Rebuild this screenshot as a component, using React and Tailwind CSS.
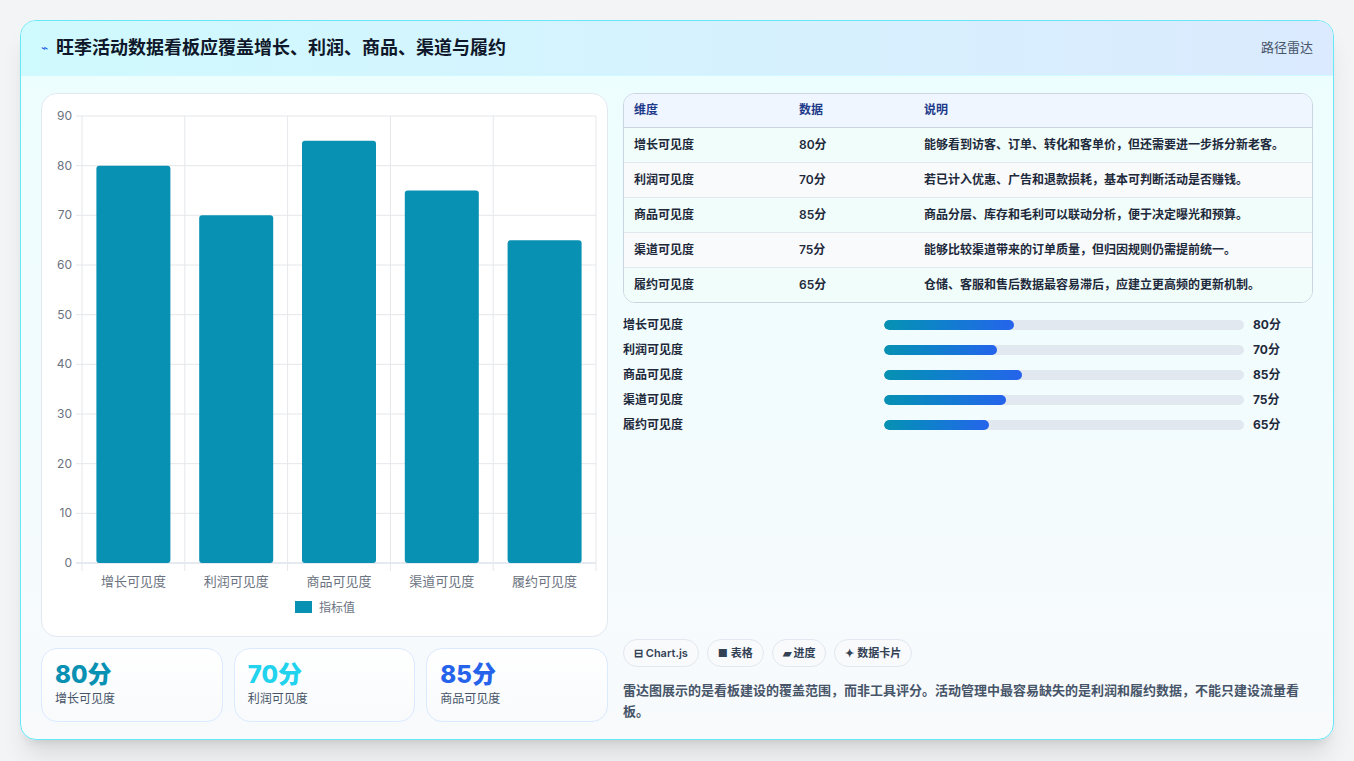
import React from 'react';

const rows = [
  { name: '增长可见度', v: 80, note: '能够看到访客、订单、转化和客单价，但还需要进一步拆分新老客。' },
  { name: '利润可见度', v: 70, note: '若已计入优惠、广告和退款损耗，基本可判断活动是否赚钱。' },
  { name: '商品可见度', v: 85, note: '商品分层、库存和毛利可以联动分析，便于决定曝光和预算。' },
  { name: '渠道可见度', v: 75, note: '能够比较渠道带来的订单质量，但归因规则仍需提前统一。' },
  { name: '履约可见度', v: 65, note: '仓储、客服和售后数据最容易滞后，应建立更高频的更新机制。' },
];

const BarChart = () => {
  const x0 = 40, x1 = 554, top = 22, bottom = 469;
  const h = bottom - top;
  const slot = (x1 - x0) / 5;
  return (
    <svg width="566" height="543" className="block">
      {[0, 10, 20, 30, 40, 50, 60, 70, 80, 90].map((t) => {
        const y = bottom - (t / 90) * h;
        return (
          <g key={t}>
            <line x1={x0 - 6} x2={x1} y1={y} y2={y} stroke={t === 0 ? '#cbd5e1' : '#e5e7eb'} />
            <text x={x0 - 10} y={y + 4} textAnchor="end" fontSize="12" fill="#6b7280">{t}</text>
          </g>
        );
      })}
      {[0, 1, 2, 3, 4, 5].map((i) => (
        <line key={i} x1={x0 + i * slot} x2={x0 + i * slot} y1={top} y2={bottom + 8} stroke="#e5e7eb" />
      ))}
      {rows.map((r, i) => {
        const bh = (r.v / 90) * h;
        const cx = x0 + i * slot + slot / 2;
        return (
          <g key={r.name}>
            <rect x={cx - 37} y={bottom - bh} width="74" height={bh} rx="3" fill="#0891b2" />
            <text x={cx} y={bottom + 23} textAnchor="middle" fontSize="13" fill="#6b7280">{r.name}</text>
          </g>
        );
      })}
      <rect x="253" y="507" width="17" height="12" fill="#0891b2" />
      <text x="277" y="518" fontSize="12" fill="#6b7280">指标值</text>
    </svg>
  );
};

export default function App() {
  return (
    <div className="min-h-screen bg-[#f3f4f6] p-5" style={{ fontFamily: 'Inter, "Noto Sans CJK SC", sans-serif' }}>
      <div className="h-[720px] rounded-2xl border border-[#67e8f9] bg-gradient-to-b from-[#ecfeff] to-[#f8fafc] shadow-xl overflow-hidden flex flex-col">
        <div className="h-[55px] shrink-0 flex items-center justify-between px-5 bg-gradient-to-r from-[#cffafe] to-[#dbeafe] border-b border-[#cffafe]">
          <div className="flex items-center gap-2">
            <span className="text-[#2563eb] text-xs">⌁</span>
            <h1 className="text-lg font-bold text-[#0f172a]">旺季活动数据看板应覆盖增长、利润、商品、渠道与履约</h1>
          </div>
          <span className="text-[13px] text-[#475569]">路径雷达</span>
        </div>
        <div className="flex-1 flex gap-[15px] px-5 pt-[17px] pb-[18px]">
          <div className="w-[567px] flex flex-col gap-[11px]">
            <div className="h-[544px] rounded-2xl border border-[#e2e8f0] bg-white">
              <BarChart />
            </div>
            <div className="grid grid-cols-3 gap-[11px]">
              {[
                ['80分', 'text-[#0891b2]', '增长可见度'],
                ['70分', 'text-[#22d3ee]', '利润可见度'],
                ['85分', 'text-[#2563eb]', '商品可见度'],
              ].map(([v, c, l]) => (
                <div key={l} className="h-[74px] rounded-2xl border border-[#dbeafe] bg-gradient-to-b from-white to-[#f8fafc] px-[13px] pt-[10px]">
                  <div className={`text-2xl font-extrabold leading-8 ${c}`}>{v}</div>
                  <div className="text-xs text-[#475569]">{l}</div>
                </div>
              ))}
            </div>
          </div>
          <div className="flex-1 flex flex-col">
            <div className="rounded-xl border border-[#cbd5e1] overflow-hidden">
              <table className="w-full text-xs text-[#1e293b]">
                <thead>
                  <tr className="bg-[#eff6ff] text-[#1e3a8a] h-[33px] border-b border-[#cbd5e1]">
                    <th className="text-left font-bold pl-[10px] w-[175px]">维度</th>
                    <th className="text-left font-bold w-[125px]">数据</th>
                    <th className="text-left font-bold">说明</th>
                  </tr>
                </thead>
                <tbody>
                  {rows.map((r, i) => (
                    <tr key={r.name} className={`h-[35px] ${i % 2 ? 'bg-[#f8fafc]' : 'bg-[#f0fdfa]'} ${i < 4 ? 'border-b border-[#e2e8f0]' : ''}`}>
                      <td className="pl-[10px] font-semibold">{r.name}</td>
                      <td className="font-semibold">{r.v}分</td>
                      <td className="font-semibold">{r.note}</td>
                    </tr>
                  ))}
                </tbody>
              </table>
            </div>
            <div className="mt-[13px] flex flex-col gap-[8px]">
              {rows.map((r) => (
                <div key={r.name} className="h-[17px] flex items-center text-xs text-[#1e293b]">
                  <span className="w-[261px] font-semibold">{r.name}</span>
                  <div className="w-[360px] h-[10px] rounded-full bg-[#e2e8f0] overflow-hidden">
                    <div className="h-full rounded-full bg-gradient-to-r from-[#0891b2] to-[#2563eb]" style={{ width: `${r.v * 0.45}%` }} />
                  </div>
                  <span className="ml-[9px] font-bold">{r.v}分</span>
                </div>
              ))}
            </div>
            <div className="flex-1" />
            <div className="flex gap-2 mb-[13px]">
              {['⊟ Chart.js', '■ 表格', '▰ 进度', '✦ 数据卡片'].map((t) => (
                <span key={t} className="h-[28px] px-[10px] flex items-center rounded-full border border-[#e2e8f0] bg-[#f8fafc] text-[11px] font-semibold text-[#334155]">{t}</span>
              ))}
            </div>
            <p className="text-[13px] leading-[21px] text-[#475569] font-semibold">雷达图展示的是看板建设的覆盖范围，而非工具评分。活动管理中最容易缺失的是利润和履约数据，不能只建设流量看板。</p>
          </div>
        </div>
      </div>
    </div>
  );
}
